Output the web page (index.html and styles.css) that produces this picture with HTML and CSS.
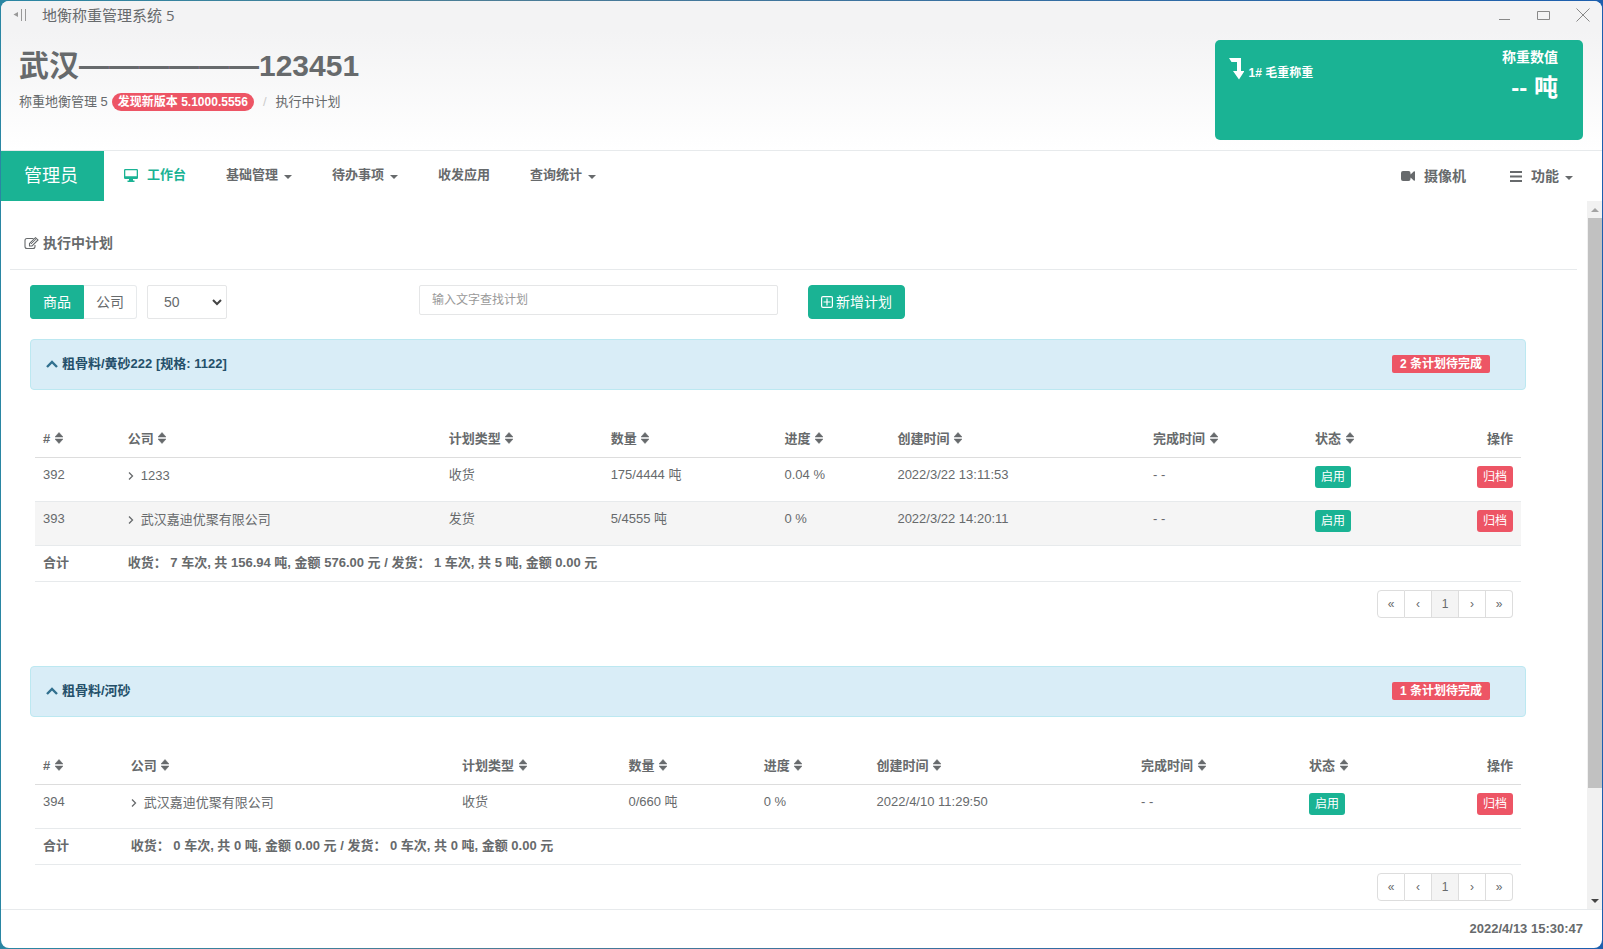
FILE: index.html
```html
<!DOCTYPE html>
<html lang="zh-CN">
<head>
<meta charset="utf-8">
<title>地衡称重管理系统 5</title>
<link rel="stylesheet" href="styles.css">
</head>
<body>
<svg class="defs" aria-hidden="true">
  <symbol id="sort" viewBox="0 0 8 12"><path d="M4 0.500L8 5H0zM0 7h8L4 11.500z" fill="currentColor" stroke="currentColor" stroke-width="0.500"/></symbol>
  <symbol id="right" viewBox="0 0 6 8"><path d="M1 0.500L4.500 4L1 7.500" fill="none" stroke="currentColor" stroke-width="1.300"/></symbol>
  <symbol id="up" viewBox="0 0 12 8"><path d="M1 7L6 2l5 5" fill="none" stroke="currentColor" stroke-width="2.400"/></symbol>
</svg>
<div class="window">
  <header class="header">
    <div class="titlebar">
      <svg class="back" width="14" height="12" viewBox="0 0 14 12"><path d="M5 3v5L0.500 5.500z" fill="#999"/><path d="M8.500 0v12M12.500 0v12" stroke="#999"/></svg>
      <span class="app-name">地衡称重管理系统 5</span>
      <div class="controls">
        <button aria-label="最小化"><svg width="14" height="14"><path d="M1 11.500h11" stroke="#888"/></svg></button>
        <button aria-label="最大化"><svg width="14" height="14"><path d="M0.500 3.500h12v8h-12z" fill="none" stroke="#888"/></svg></button>
        <button aria-label="关闭"><svg width="14" height="14"><path d="M0.500 0.500l13 13M13.500 0.500l-13 13" stroke="#888"/></svg></button>
      </div>
    </div>
    <div class="heading">
      <div>
        <h1>武汉——————123451</h1>
        <div class="breadcrumb"><span>称重地衡管理 5</span><span class="pill">发现新版本 5.1000.5556</span><span class="slash">/</span><span>执行中计划</span></div>
      </div>
      <section class="scale">
        <div class="scale-left"><svg width="15" height="22" viewBox="0 0 15 22"><path d="M0 0h12v13h3.500L10 21.500L4 13h4V4H2.500z" fill="#fff"/></svg><span>1# 毛重称重</span></div>
        <div class="scale-right"><div class="scale-label">称重数值</div><div class="scale-value">-- 吨</div></div>
      </section>
    </div>
  </header>
  <nav class="nav">
    <a class="brand" href="#">管理员</a>
    <a class="item active" href="#"><svg class="monitor" width="14" height="13" viewBox="0 0 14 13"><path d="M1.200 0h11.600Q14 0 14 1.200v7.600Q14 10 12.800 10H9v1.500h1.500V13h-7v-1.500H5V10H1.200Q0 10 0 8.800V1.200Q0 0 1.200 0zM1.300 1.300v6h11.400v-6z" fill="currentColor" fill-rule="evenodd"/></svg>工作台</a>
    <a class="item" href="#">基础管理<i class="caret"></i></a>
    <a class="item" href="#">待办事项<i class="caret"></i></a>
    <a class="item" href="#">收发应用</a>
    <a class="item" href="#">查询统计<i class="caret"></i></a>
    <div class="nav-right">
      <a class="item" href="#"><svg class="nav-icon" width="14" height="10" viewBox="0 0 14 10"><path d="M2 0h5.500q2 0 2 2v1.600L13 0.300Q14 0 14 1v8q0 1-1 0.700L9.500 6.400V8q0 2-2 2H2Q0 10 0 8V2Q0 0 2 0z" fill="currentColor"/></svg>摄像机</a>
      <a class="item" href="#"><svg class="nav-icon" width="12" height="11" viewBox="0 0 12 11"><path d="M0 1h12M0 5.500h12M0 10h12" stroke="currentColor" stroke-width="1.800"/></svg>功能<i class="caret"></i></a>
    </div>
  </nav>
  <div class="body">
    <main class="content">
      <h2 class="section-title"><svg width="15" height="13" viewBox="0 0 15 13"><path d="M9.500 1.500H3Q1 1.500 1 3.500v6Q1 11.500 3 11.500h6q2 0 2-2V8" fill="none" stroke="currentColor" stroke-width="1.100"/><path d="M5.500 9V6.500L11.500 0.700L14 3L8 9z" fill="none" stroke="currentColor" stroke-width="1.100"/><path d="M7 7l5-4.800" stroke="currentColor"/></svg>执行中计划</h2>
      <div class="panel">
        <div class="toolbar">
          <div class="filters">
            <div class="group"><button class="btn primary">商品</button><button class="btn plain">公司</button></div>
            <div class="select-wrap"><select aria-label="每页条数"><option>50</option></select><svg width="10" height="7" viewBox="0 0 10 7"><path d="M1 1l4 4l4-4" fill="none" stroke="#444" stroke-width="2"/></svg></div>
          </div>
          <input class="search" type="text" placeholder="输入文字查找计划" aria-label="查找计划">
          <button class="btn primary add"><svg width="12" height="12" viewBox="0 0 12 12"><path d="M2 0.600h8q1.400 0 1.400 1.400v8q0 1.400-1.400 1.400H2Q0.600 11.400 0.600 10V2Q0.600 0.600 2 0.600zM6 2.500v7M2.500 6h7" fill="none" stroke="#fff" stroke-width="1.200"/></svg>新增计划</button>
        </div>

        <section class="plan">
          <div class="alert"><a href="#"><svg width="12" height="8"><use href="#up"/></svg>粗骨料/黄砂222 [规格: 1122]</a><span class="label">2 条计划待完成</span></div>
          <div class="table-box">
            <table class="table-a">
              <colgroup><col class="c1"><col class="c2"><col class="c3"><col class="c4"><col class="c5"><col class="c6"><col class="c7"><col></colgroup>
              <thead><tr><th># <svg class="sort"><use href="#sort"/></svg></th><th>公司 <svg class="sort"><use href="#sort"/></svg></th><th>计划类型 <svg class="sort"><use href="#sort"/></svg></th><th>数量 <svg class="sort"><use href="#sort"/></svg></th><th>进度 <svg class="sort"><use href="#sort"/></svg></th><th>创建时间 <svg class="sort"><use href="#sort"/></svg></th><th>完成时间 <svg class="sort"><use href="#sort"/></svg></th><th><div class="split"><span>状态 <svg class="sort"><use href="#sort"/></svg></span><span>操作</span></div></th></tr></thead>
              <tbody>
                <tr><td>392</td><td class="company"><svg class="right"><use href="#right"/></svg>1233</td><td>收货</td><td>175/4444 吨</td><td>0.04 %</td><td>2022/3/22 13:11:53</td><td>- -</td><td><div class="split"><button class="mini on">启用</button><button class="mini off">归档</button></div></td></tr>
                <tr class="odd"><td>393</td><td class="company"><svg class="right"><use href="#right"/></svg>武汉嘉迪优聚有限公司</td><td>发货</td><td>5/4555 吨</td><td>0 %</td><td>2022/3/22 14:20:11</td><td>- -</td><td><div class="split"><button class="mini on">启用</button><button class="mini off">归档</button></div></td></tr>
              </tbody>
              <tfoot><tr><td>合计</td><td colspan="7">收货： 7 车次, 共 156.94 吨, 金额 576.00 元 / 发货： 1 车次, 共 5 吨, 金额 0.00 元</td></tr></tfoot>
            </table>
            <div class="pager"><button>«</button><button>‹</button><button class="current">1</button><button>›</button><button>»</button></div>
          </div>
        </section>

        <section class="plan">
          <div class="alert"><a href="#"><svg width="12" height="8"><use href="#up"/></svg>粗骨料/河砂</a><span class="label">1 条计划待完成</span></div>
          <div class="table-box">
            <table class="table-b">
              <colgroup><col class="c1"><col class="c2"><col class="c3"><col class="c4"><col class="c5"><col class="c6"><col class="c7"><col></colgroup>
              <thead><tr><th># <svg class="sort"><use href="#sort"/></svg></th><th>公司 <svg class="sort"><use href="#sort"/></svg></th><th>计划类型 <svg class="sort"><use href="#sort"/></svg></th><th>数量 <svg class="sort"><use href="#sort"/></svg></th><th>进度 <svg class="sort"><use href="#sort"/></svg></th><th>创建时间 <svg class="sort"><use href="#sort"/></svg></th><th>完成时间 <svg class="sort"><use href="#sort"/></svg></th><th><div class="split"><span>状态 <svg class="sort"><use href="#sort"/></svg></span><span>操作</span></div></th></tr></thead>
              <tbody>
                <tr><td>394</td><td class="company"><svg class="right"><use href="#right"/></svg>武汉嘉迪优聚有限公司</td><td>收货</td><td>0/660 吨</td><td>0 %</td><td>2022/4/10 11:29:50</td><td>- -</td><td><div class="split"><button class="mini on">启用</button><button class="mini off">归档</button></div></td></tr>
              </tbody>
              <tfoot><tr><td>合计</td><td colspan="7">收货： 0 车次, 共 0 吨, 金额 0.00 元 / 发货： 0 车次, 共 0 吨, 金额 0.00 元</td></tr></tfoot>
            </table>
            <div class="pager"><button>«</button><button>‹</button><button class="current">1</button><button>›</button><button>»</button></div>
          </div>
        </section>
      </div>
    </main>
    <div class="scrollbar">
      <svg width="15" height="17" viewBox="0 0 15 17"><path d="M4 11h8L8 7z" fill="#a3a3a3"/></svg>
      <div class="track"><div class="thumb"></div></div>
      <svg width="15" height="17" viewBox="0 0 15 17"><path d="M4 7h8l-4 4z" fill="#444"/></svg>
    </div>
  </div>
  <footer class="footer">2022/4/13 15:30:47</footer>
</div>
</body>
</html>
```

FILE: styles.css
```css
* { box-sizing: border-box; }
body {
  margin: 0;
  height: 100vh;
  padding: 1px;
  background: linear-gradient(90deg, #2a86a3, #4c7d96 30%, #1d5fae);
  color: #676a6c;
  font: 13px/18px "Liberation Sans", "Noto Sans CJK SC", sans-serif;
}
a { color: inherit; text-decoration: none; }
button, select, input { font: inherit; color: inherit; }
button { padding: 0; border: 0; background: none; }
h1, h2 { margin: 0; }
svg { flex: none; }
.defs { display: none; }

.window {
  display: flex;
  flex-direction: column;
  height: 100%;
  overflow: hidden;
  border-radius: 8px;
  background: #fff;
}

.header {
  height: 150px;
  background: linear-gradient(#f3f3f4 20%, #fff);
  border-bottom: 1px solid #e7eaec;
}
.titlebar {
  display: flex;
  align-items: center;
  height: 28px;
  padding: 0 12px;
}
.app-name {
  margin-left: 15px;
  font-family: "Open Sans", "Noto Sans CJK SC", sans-serif;
  font-size: 15px;
}
.controls { display: flex; gap: 25px; margin-left: auto; }
.controls button { display: flex; }
.heading {
  display: flex;
  justify-content: space-between;
  align-items: flex-start;
  padding: 11px 19px 0 18px;
}
h1 { margin-top: 8px; font-size: 30px; line-height: 36px; }
.breadcrumb { display: flex; align-items: center; margin-top: 9px; }
.pill {
  margin-left: 4px;
  padding: 0 6px;
  border-radius: 9px;
  background: #ed5565;
  color: #fff;
  font-size: 12px;
  font-weight: bold;
}
.slash { margin: 0 9px; color: #ccc; }
.scale {
  display: flex;
  justify-content: space-between;
  width: 23.5%;
  height: 100px;
  padding: 8px 25px 0 14px;
  border-radius: 5px;
  background: #1ab394;
  color: #fff;
  font-weight: bold;
}
.scale-left { display: flex; gap: 4px; padding-top: 10px; font-size: 12px; line-height: 30px; }
.scale-right { text-align: right; }
.scale-label { font-size: 14px; }
.scale-value { margin-top: 8px; font-size: 24px; line-height: 28px; }

.nav { display: flex; height: 50px; font-weight: bold; }
.brand {
  display: flex;
  align-items: center;
  padding: 0 26px 0 23px;
  background: #1ab394;
  color: #fff;
  font-size: 18px;
  font-weight: normal;
}
.item { display: flex; align-items: center; padding: 0 20px 2px; }
.active { color: #1ab394; }
.monitor, .nav-icon { margin-right: 9px; }
.caret {
  margin: 3px 0 0 6px;
  border: 4px solid transparent;
  border-top-color: currentColor;
  border-bottom: 0;
}
.nav-right { display: flex; gap: 4px; margin-left: auto; padding-right: 9px; font-size: 14px; }
.nav-right .item { padding-bottom: 0; }

.body { display: flex; flex: 1; min-height: 0; }
.content { flex: 1; overflow: hidden; padding: 0 10px 0 9px; }
.section-title {
  display: flex;
  align-items: center;
  gap: 4px;
  height: 69px;
  padding: 16px 14px 0;
  border-bottom: 1px solid #e7eaec;
  font-size: 14px;
}
.panel { padding: 15px 51px 0 20px; }
.toolbar { display: grid; grid-template-columns: 26% 24% auto; align-items: start; }
.filters, .group { display: flex; }
.filters { gap: 10px; }
.btn {
  display: flex;
  align-items: center;
  justify-content: center;
  height: 34px;
  padding: 0 12px;
  border: 1px solid #e7eaec;
  font-size: 14px;
}
.primary { border-color: #1ab394; border-radius: 4px; background: #1ab394; color: #fff; }
.group .primary { border-radius: 3px 0 0 3px; }
.group .plain { border-left: 0; border-radius: 0 3px 3px 0; }
.add { justify-self: start; gap: 3px; margin-left: 30px; }
.select-wrap { position: relative; }
.select-wrap svg { position: absolute; right: 5px; top: 14px; pointer-events: none; }
select {
  width: 80px;
  height: 34px;
  padding: 0 16px;
  border: 1px solid #e5e6e7;
  border-radius: 2px;
  background: #fff;
  appearance: none;
  font-size: 14px;
}
.search {
  width: 100%;
  height: 30px;
  padding: 0 12px;
  border: 1px solid #e5e6e7;
  border-radius: 2px;
  font-size: 12px;
}
.search::placeholder { color: #999; }

.plan { margin-bottom: 48px; }
.toolbar + .plan { margin-top: 20px; }
.alert {
  display: flex;
  align-items: center;
  justify-content: space-between;
  height: 51px;
  padding: 0 35px 2px 15px;
  border: 1px solid #bce8f1;
  border-radius: 4px;
  background: #d9edf7;
}
.alert a { display: flex; align-items: center; gap: 4px; color: #24506a; font-weight: bold; }
.alert svg { color: #31708f; }
.label {
  padding: 0 8px;
  border-radius: 2px;
  background: #ed5565;
  color: #fff;
  font-size: 12px;
  font-weight: bold;
}
.table-box { padding: 28px 5px 0; }
table { width: 100%; table-layout: fixed; border-collapse: separate; border-spacing: 0; }
th, td { padding: 8px; text-align: left; vertical-align: top; border-bottom: 1px solid #e7eaec; }
th { height: 40px; padding-top: 12px; border-bottom-color: #ddd; white-space: nowrap; }
tbody td { height: 44px; }
tfoot td { height: 36px; font-weight: bold; }
.odd { background: #f5f5f5; }
td.company { padding-top: 9px; }
.table-a .c1 { width: 5.7%; }
.table-a .c2 { width: 21.6%; }
.table-a .c3 { width: 10.9%; }
.table-a .c4 { width: 11.7%; }
.table-a .c5 { width: 7.6%; }
.table-a .c6 { width: 17.2%; }
.table-a .c7 { width: 10.9%; }
.table-b .c1 { width: 5.9%; }
.table-b .c2 { width: 22.3%; }
.table-b .c3 { width: 11.2%; }
.table-b .c4 { width: 9.1%; }
.table-b .c5 { width: 7.6%; }
.table-b .c6 { width: 17.8%; }
.table-b .c7 { width: 11.3%; }
.sort { width: 8px; height: 12px; margin-left: 1px; vertical-align: -1px; }
.right { width: 6px; height: 8px; margin-right: 7px; }
.split { display: flex; justify-content: space-between; }
.mini { width: 36px; height: 22px; border-radius: 3px; color: #fff; font-size: 12px; }
.on { background: #1ab394; }
.off { background: #ed5565; }
.pager { display: flex; justify-content: flex-end; padding: 8px 8px 0; }
.pager button {
  width: 27px;
  height: 28px;
  border: 1px solid #ddd;
  border-left: 0;
  font-size: 12px;
}
.pager button:first-child { width: 28px; border-left: 1px solid #ddd; border-radius: 4px 0 0 4px; }
.pager button:last-child { border-radius: 0 4px 4px 0; }
.pager .current { background: #f4f4f4; }

.scrollbar { display: flex; flex-direction: column; width: 15px; background: #f1f1f1; }
.track { flex: 1; }
.thumb { height: 84.5%; margin-left: 1px; background: #c1c1c1; }

.footer {
  height: 39px;
  padding: 10px 19px;
  border-top: 1px solid #e7eaec;
  text-align: right;
  font-weight: bold;
}
```
